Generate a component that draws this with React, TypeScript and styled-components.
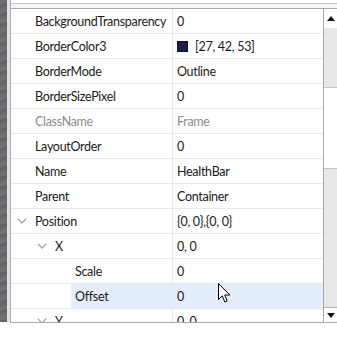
import React from "react";
import styled, { createGlobalStyle, css } from "styled-components";

const GlobalStyle = createGlobalStyle`
  html, body { margin: 0; padding: 0; background: #ffffff; width: 337px; height: 337px; overflow: hidden; }
  #root { width: 337px; height: 337px; }
  * { box-sizing: border-box; }
`;

const Screen = styled.div`
  position: relative;
  display: flex;
  align-items: flex-start;
  width: 337px;
  height: 337px;
  background: #ffffff;
  font-family: Lato, "Open Sans", sans-serif;
  font-size: 12.5px;
  letter-spacing: -0.3px;
  color: #1b1b1b;
`;

const Wallpaper = styled.div`
  width: 7px;
  height: 322px;
  background: repeating-linear-gradient(160deg, #6d686d 0px, #77727a 3px, #645f66 6px, #716c70 9px);
`;

const Gutter = styled.div`
  width: 3px;
  height: 322px;
  background: #e2e2e2;
`;

const Panel = styled.div`
  flex: 1;
  height: 323px;
  display: flex;
  flex-direction: column;
  border-left: 1px solid #a9a9a9;
`;

const TopStrip = styled.div`
  height: 4px;
  background: #ffffff;
  border-bottom: 1px solid #c9c9c9;
`;

const Spacer = styled.div`
  height: 4px;
  background: #f6f6f6;
`;

const Table = styled.div`
  flex: 1;
  display: flex;
  min-height: 0;
  border-top: 1px solid #a9a9a9;
  border-bottom: 1px solid #a9a9a9;
  background: #ffffff;
`;

const Rows = styled.div`
  flex: 1;
  min-width: 0;
  overflow: hidden;
`;

const Row = styled.div`
  display: grid;
  grid-template-columns: 162px 1fr;
  height: 25px;
  border-bottom: 1px solid #e9e9e9;
`;

const LabelCell = styled.div<{ $level: number }>`
  display: flex;
  align-items: stretch;
  padding-left: ${(p) => p.$level * 20}px;
  border-right: 1px solid #e9e9e9;
`;

const ChevronSlot = styled.div`
  width: 20px;
  flex: none;
  display: flex;
  align-items: center;
  justify-content: center;
  padding-left: 1px;
`;

const selectedBg = css`
  background: #e4edfc;
`;

const LabelText = styled.div<{ $muted?: boolean; $selected?: boolean }>`
  flex: 1;
  display: flex;
  align-items: center;
  padding-left: 4px;
  white-space: nowrap;
  color: ${(p) => (p.$muted ? "#8c8c8c" : "#1b1b1b")};
  ${(p) => p.$selected && selectedBg}
`;

const ValueCell = styled.div<{ $muted?: boolean; $selected?: boolean }>`
  display: flex;
  align-items: center;
  gap: 7px;
  padding-left: 4px;
  white-space: nowrap;
  color: ${(p) => (p.$muted ? "#8c8c8c" : "#1b1b1b")};
  ${(p) => p.$selected && selectedBg}
`;

const Swatch = styled.span<{ $color: string }>`
  width: 11px;
  height: 11px;
  background: ${(p) => p.$color};
  border: 1px solid #101020;
`;

const Scrollbar = styled.div`
  width: 14px;
  flex: none;
  display: flex;
  flex-direction: column;
  border-left: 1px solid #a9a9a9;
`;

const ArrowButton = styled.div<{ $down?: boolean }>`
  height: ${(p) => (p.$down ? 15 : 19)}px;
  display: flex;
  align-items: center;
  justify-content: center;
  background: #ffffff;
  ${(p) => p.$down && "border-top: 1px solid #b4b4b4;"}
`;

const Track = styled.div`
  flex: 1;
  background: #e8e8e8;
  padding-top: 59px;
`;

const Thumb = styled.div`
  height: 82px;
  background: #ffffff;
  border-top: 1px solid #c4c4c4;
  border-bottom: 1px solid #c4c4c4;
`;

const Cursor = styled.svg`
  position: absolute;
  left: 218px;
  top: 283px;
`;

const Chevron = () => (
  <svg width="10" height="6" viewBox="0 0 10 6">
    <polyline points="0.8,0.8 5,5 9.2,0.8" fill="none" stroke="#a7a7a7" strokeWidth="1.3" />
  </svg>
);

const Triangle = ({ down }: { down?: boolean }) => (
  <svg width="8" height="5" viewBox="0 0 8 5">
    <polygon points={down ? "0,0 8,0 4,5" : "0,5 8,5 4,0"} fill="#111" />
  </svg>
);

type Prop = {
  name: string;
  value: string;
  level?: number;
  expanded?: boolean;
  muted?: boolean;
  selected?: boolean;
  color?: string;
};

const props: Prop[] = [
  { name: "BackgroundTransparency", value: "0" },
  { name: "BorderColor3", value: "[27, 42, 53]", color: "#1b1d4a" },
  { name: "BorderMode", value: "Outline" },
  { name: "BorderSizePixel", value: "0" },
  { name: "ClassName", value: "Frame", muted: true },
  { name: "LayoutOrder", value: "0" },
  { name: "Name", value: "HealthBar" },
  { name: "Parent", value: "Container" },
  { name: "Position", value: "{0, 0},{0, 0}", expanded: true },
  { name: "X", value: "0, 0", level: 1, expanded: true },
  { name: "Scale", value: "0", level: 2 },
  { name: "Offset", value: "0", level: 2, selected: true },
  { name: "Y", value: "0, 0", level: 1, expanded: true },
];

export default function App() {
  return (
    <>
      <GlobalStyle />
      <Screen>
        <Wallpaper />
        <Gutter />
        <Panel>
          <TopStrip />
          <Spacer />
          <Table>
            <Rows>
              {props.map((p) => (
                <Row key={p.name}>
                  <LabelCell $level={p.level ?? 0}>
                    <ChevronSlot>{p.expanded && <Chevron />}</ChevronSlot>
                    <LabelText $muted={p.muted} $selected={p.selected}>
                      {p.name}
                    </LabelText>
                  </LabelCell>
                  <ValueCell $muted={p.muted} $selected={p.selected}>
                    {p.color && <Swatch $color={p.color} />}
                    {p.value}
                  </ValueCell>
                </Row>
              ))}
            </Rows>
            <Scrollbar>
              <ArrowButton>
                <Triangle />
              </ArrowButton>
              <Track>
                <Thumb />
              </Track>
              <ArrowButton $down>
                <Triangle down />
              </ArrowButton>
            </Scrollbar>
          </Table>
        </Panel>
        <Cursor width="13" height="21" viewBox="0 0 13 21">
          <path
            d="M0.5 0.5 L0.5 16.5 L4.3 12.8 L6.8 19 L9.2 18 L6.7 12 L11.8 12 Z"
            fill="#ffffff"
            stroke="#000"
            strokeWidth="1"
            strokeLinejoin="miter"
          />
        </Cursor>
      </Screen>
    </>
  );
}
